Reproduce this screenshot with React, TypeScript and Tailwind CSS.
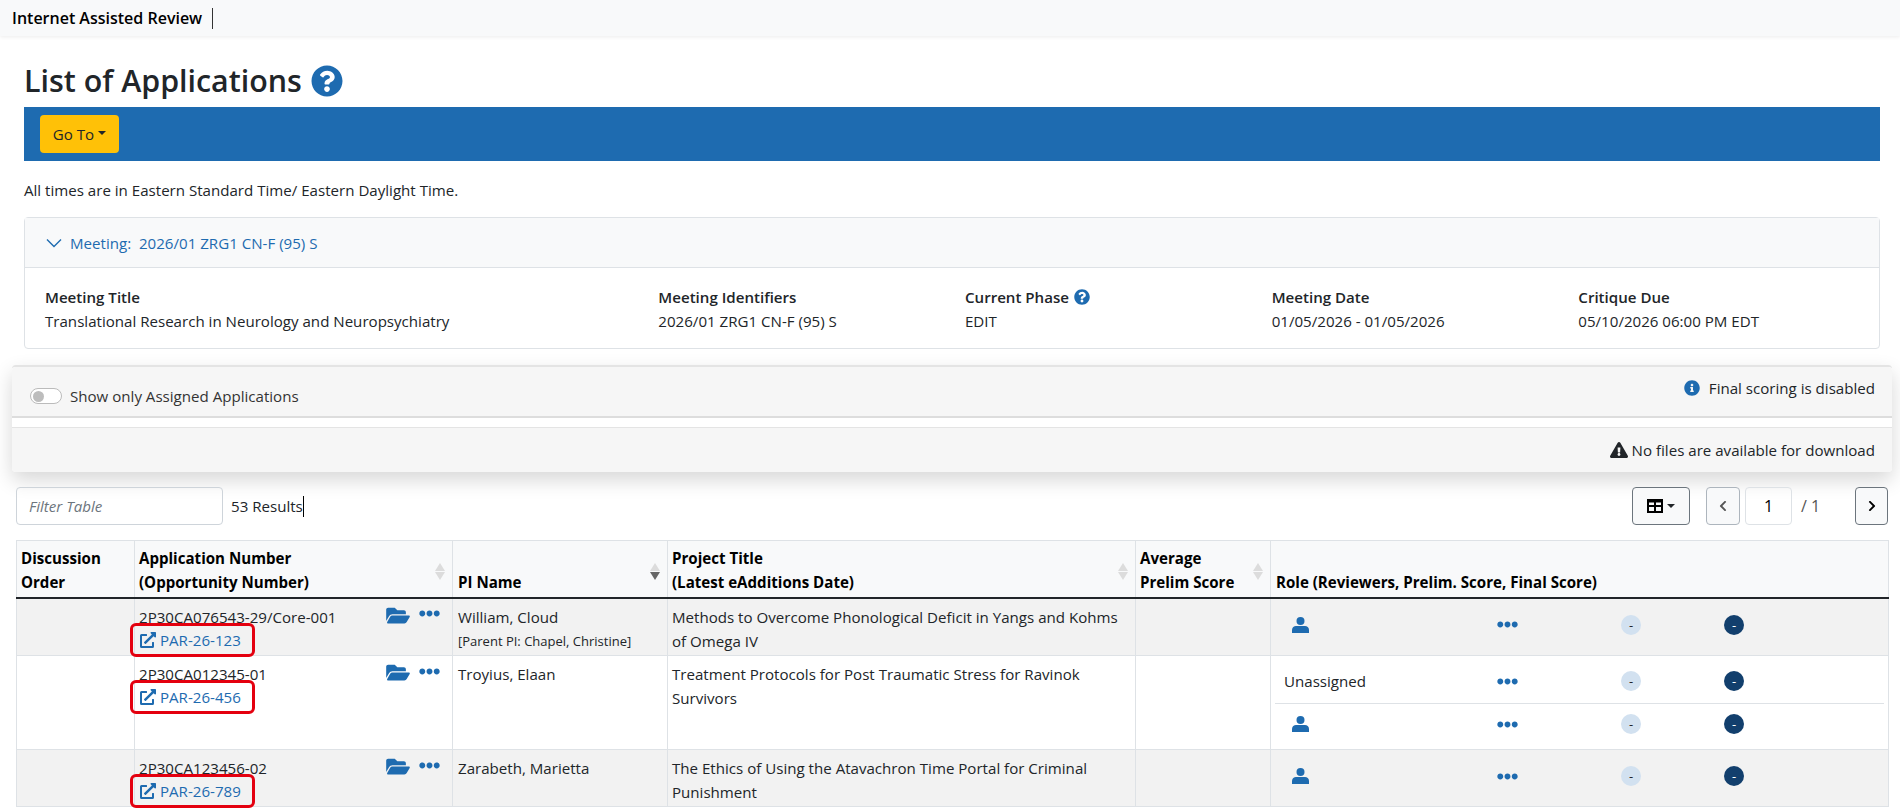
import React from "react";
import {
  FaQuestionCircle,
  FaFolderOpen,
  FaEllipsisH,
  FaExternalLinkAlt,
  FaInfoCircle,
  FaExclamationTriangle,
  FaChevronLeft,
  FaChevronRight,
} from "react-icons/fa";

const SortIcon = ({ active }: { active?: boolean }) => (
  <svg width="10" height="17" viewBox="0 0 10 17" className="absolute right-[7px] top-[22px]">
    <path d="M5 0 L10 8 L0 8 Z" fill="#dcdcdc" />
    <path d="M0 9 L10 9 L5 17 Z" fill={active ? "#666666" : "#dcdcdc"} />
  </svg>
);

const PersonIcon = () => (
  <svg width="17" height="16" viewBox="0 0 17 16" fill="#1e6bb0">
    <circle cx="8.5" cy="4" r="4" />
    <path d="M0 16 V13 C0 10.5 2 9 4 9 H13 C15 9 17 10.5 17 13 V16 Z" />
  </svg>
);

const ScoreDots = ({ children }: { children?: React.ReactNode }) => (
  <div className="flex items-center h-[20px]">
    <div className="w-[205px] shrink-0">{children}</div>
    <FaEllipsisH className="w-[21px] h-[21px] text-[#1e6bb0] shrink-0" />
    <div className="w-[103px] shrink-0" />
    <div className="w-[20px] h-[20px] rounded-full bg-[#d2e1f0] text-[#212529] text-[13px] flex items-center justify-center shrink-0">-</div>
    <div className="w-[83px] shrink-0" />
    <div className="w-[20px] h-[20px] rounded-full bg-[#123f6d] text-white text-[13px] flex items-center justify-center shrink-0">-</div>
  </div>
);

const AppCell = ({ number, par }: { number: string; par: string }) => (
  <td className="relative align-top border-x border-[#dee2e6] pt-[6px] pl-[4px] pr-[12px]">
    <div className="flex items-start justify-between h-[24px]">
      <span>{number}</span>
      <span className="flex items-center gap-[9px] text-[#1e6bb0]">
        <FaFolderOpen className="w-[24px] h-[21px]" />
        <FaEllipsisH className="w-[21px] h-[21px] -mt-[3px]" />
      </span>
    </div>
    <div className="absolute left-[-5px] top-[24px] w-[125px] h-[34px] border-[3px] border-[#e4000f] rounded-[6px] flex items-center pl-[7px] text-[#1e6bb0]">
      <FaExternalLinkAlt className="w-[16px] h-[16px] mr-[4px]" />
      <span>{par}</span>
    </div>
  </td>
);

const columns = [118, 318, 215, 468, 135, 618];

export default function App() {
  return (
    <div className="h-[808px] overflow-hidden bg-white text-[15.1px] leading-[24px] text-[#212529] font-['Open_Sans','Noto_Sans',sans-serif]">
      <header className="h-[36px] bg-[#f8f9fa] shadow-[0_1px_4px_rgba(0,0,0,0.08)] flex items-center pl-[12px]">
        <span className="text-[16px] font-semibold text-[#000] pr-[10px] border-r border-[#333] leading-[21px]">Internet Assisted Review</span>
      </header>

      <main className="pl-[24px] pr-[20px]">
        <div className="flex items-center h-[71px] pt-[18px]">
          <h1 className="text-[30.4px] font-semibold leading-[38px]">List of Applications</h1>
          <FaQuestionCircle className="w-[32px] h-[32px] text-[#1e6bb0] ml-[9px]" />
        </div>

        <div className="h-[54px] bg-[#1e6bb0] flex items-center pl-[16px]">
          <button className="w-[79px] h-[38px] bg-[#ffc107] rounded-[4px] text-[#212529] flex items-center justify-center">
            Go To
            <span className="ml-[4px] mb-[3px] border-x-[4px] border-x-transparent border-t-[4px] border-t-[#212529]" />
          </button>
        </div>

        <p className="mt-[17px] h-[24px]">All times are in Eastern Standard Time/ Eastern Daylight Time.</p>

        <section className="mt-[15px] h-[132px] border border-[#dee2e6] rounded-[4px]">
          <div className="h-[50px] bg-[#f8f9fa] border-b border-[#dee2e6] flex items-center pl-[21px] text-[#1e6bb0]">
            <svg width="16" height="16" viewBox="0 0 16 16" fill="none" stroke="currentColor" strokeWidth="1.4" className="mr-[8px]">
              <path d="M1 4.5 L8 11.5 L15 4.5" />
            </svg>
            <span>Meeting:&nbsp; 2026/01 ZRG1 CN-F (95) S</span>
          </div>
          <div className="grid grid-cols-6 w-[1860px] pl-[20px] pt-[17px]">
            <div className="col-span-2">
              <div className="font-semibold">Meeting Title</div>
              <div>Translational Research in Neurology and Neuropsychiatry</div>
            </div>
            <div>
              <div className="font-semibold">Meeting Identifiers</div>
              <div>2026/01 ZRG1 CN-F (95) S</div>
            </div>
            <div>
              <div className="font-semibold flex items-center">
                Current Phase
                <FaQuestionCircle className="w-[16px] h-[16px] text-[#1e6bb0] ml-[5px]" />
              </div>
              <div>EDIT</div>
            </div>
            <div>
              <div className="font-semibold">Meeting Date</div>
              <div>01/05/2026 - 01/05/2026</div>
            </div>
            <div>
              <div className="font-semibold">Critique Due</div>
              <div>05/10/2026 06:00 PM EDT</div>
            </div>
          </div>
        </section>
      </main>

      <section className="ml-[12px] mr-[8px] mt-[16px] h-[107px] shadow-[0_8px_20px_rgba(0,0,0,0.16)] rounded-[4px] bg-white border-t-2 border-[#e4e4e4]">
        <div className="h-[51px] bg-[#f6f6f6] border-b-2 border-[#dddddd] flex items-start justify-between pr-[17px] rounded-t-[4px]">
          <label className="flex items-center mt-[17px] pl-[18px] text-[#333]">
            <span className="w-[32px] h-[16px] rounded-full border border-[#bbbbbb] bg-white flex items-center pl-[2px] mr-[8px]">
              <span className="w-[11px] h-[11px] rounded-full bg-[#bdbdbd]" />
            </span>
            Show only Assigned Applications
          </label>
          <div className="flex items-center mt-[9px]">
            <FaInfoCircle className="w-[16px] h-[16px] text-[#1e6bb0] mr-[9px]" />
            Final scoring is disabled
          </div>
        </div>
        <div className="mt-[9px] h-[45px] bg-[#f6f6f6] border-t border-[#e4e4e4] flex items-center justify-end pr-[17px] rounded-b-[4px]">
          <FaExclamationTriangle className="w-[18px] h-[16px] text-[#212529] mr-[4px]" />
          No files are available for download
        </div>
      </section>

      <div className="relative z-10 flex items-center h-[38px] mt-[15px] pl-[16px] pr-[12px]">
        <input
          placeholder="Filter Table"
          className="w-[207px] h-[38px] border border-[#ced4da] rounded-[4px] pl-[12px] italic outline-none placeholder:text-[#6c757d]"
        />
        <span className="ml-[8px]">53 Results</span>
        <span className="w-px h-[21px] bg-black" />
        <div className="ml-auto flex items-center">
          <button className="w-[58px] h-[38px] border border-[#6c757d] rounded-[4px] bg-[#f8f9fa] flex items-center justify-center">
            <svg width="16" height="14" viewBox="0 0 16 14" className="mr-[4px]">
              <path d="M1 1 H15 V13 H1 Z M1 7 H15 M8 1 V13" fill="none" stroke="#000" strokeWidth="2" />
              <rect x="1" y="1" width="14" height="2.5" fill="#000" />
            </svg>
            <span className="border-x-[4px] border-x-transparent border-t-[4px] border-t-[#212529]" />
          </button>
          <button className="ml-[16px] w-[34px] h-[38px] border border-[#adb5bd] rounded-[4px] bg-[#f8f9fa] flex items-center justify-center text-[#555]">
            <FaChevronLeft className="w-[12px] h-[12px]" />
          </button>
          <div className="ml-[5px] w-[47px] h-[38px] border border-[#dee2e6] rounded-[4px] flex items-center justify-center text-[16px] text-[#000]">1</div>
          <span className="ml-[9px] w-[54px] text-[16px] text-[#555]">/ 1</span>
          <button className="w-[33px] h-[38px] border border-[#6c757d] rounded-[4px] bg-[#f8f9fa] flex items-center justify-center text-black">
            <FaChevronRight className="w-[12px] h-[12px]" />
          </button>
        </div>
      </div>

      <div className="relative z-10 ml-[16px] mt-[15px] w-[1872px]">
        <table className="table-fixed border-collapse w-full">
          <colgroup>
            {columns.map((w, i) => (
              <col key={i} style={{ width: w }} />
            ))}
          </colgroup>
          <thead>
            <tr className="h-[57px] bg-[#f8f9fa] border-t border-[#dee2e6] border-b-[2px] border-b-[#212529] text-black font-bold text-left align-bottom">
              <th className="relative border-x border-[#dee2e6] pl-[4px] pb-[3px] font-bold">Discussion<br />Order</th>
              <th className="relative border-x border-[#dee2e6] pl-[4px] pb-[3px] font-bold">Application Number<br />(Opportunity Number)<SortIcon /></th>
              <th className="relative border-x border-[#dee2e6] pl-[5px] pb-[3px] font-bold">PI Name<SortIcon active /></th>
              <th className="relative border-x border-[#dee2e6] pl-[4px] pb-[3px] font-bold">Project Title<br />(Latest eAdditions Date)<SortIcon /></th>
              <th className="relative border-x border-[#dee2e6] pl-[4px] pb-[3px] font-bold">Average<br />Prelim Score<SortIcon /></th>
              <th className="relative border-x border-[#dee2e6] pl-[5px] pb-[3px] font-bold">Role (Reviewers, Prelim. Score, Final Score)</th>
            </tr>
          </thead>
          <tbody>
            <tr className="h-[58px] bg-[#f2f2f2] border-b border-[#dee2e6]">
              <td className="border-x border-[#dee2e6]" />
              <AppCell number="2P30CA076543-29/Core-001" par="PAR-26-123" />
              <td className="align-top border-x border-[#dee2e6] pt-[6px] pl-[5px]">
                William, Cloud
                <div className="text-[13px]">[Parent PI: Chapel, Christine]</div>
              </td>
              <td className="align-top border-x border-[#dee2e6] pt-[6px] pl-[4px] pr-[14px]">Methods to Overcome Phonological Deficit in Yangs and Kohms of Omega IV</td>
              <td className="border-x border-[#dee2e6]" />
              <td className="align-top border-x border-[#dee2e6] pt-[16px] pl-[21px]">
                <ScoreDots><PersonIcon /></ScoreDots>
              </td>
            </tr>
            <tr className="h-[94px] border-b border-[#dee2e6]">
              <td className="border-x border-[#dee2e6]" />
              <AppCell number="2P30CA012345-01" par="PAR-26-456" />
              <td className="align-top border-x border-[#dee2e6] pt-[6px] pl-[5px]">Troyius, Elaan</td>
              <td className="align-top border-x border-[#dee2e6] pt-[6px] pl-[4px] pr-[14px]">Treatment Protocols for Post Traumatic Stress for Ravinok Survivors</td>
              <td className="border-x border-[#dee2e6]" />
              <td className="align-top border-x border-[#dee2e6] px-[4px] pt-[15px]">
                <div className="pl-[17px] pb-[12px] border-b border-[#dee2e6]">
                  <ScoreDots><span className="-ml-[8px]">Unassigned</span></ScoreDots>
                </div>
                <div className="pl-[17px] pt-[10px]">
                  <ScoreDots><PersonIcon /></ScoreDots>
                </div>
              </td>
            </tr>
            <tr className="h-[57px] bg-[#f2f2f2] border-b border-[#dee2e6]">
              <td className="border-x border-[#dee2e6]" />
              <AppCell number="2P30CA123456-02" par="PAR-26-789" />
              <td className="align-top border-x border-[#dee2e6] pt-[6px] pl-[5px]">Zarabeth, Marietta</td>
              <td className="align-top border-x border-[#dee2e6] pt-[6px] pl-[4px] pr-[14px]">The Ethics of Using the Atavachron Time Portal for Criminal Punishment</td>
              <td className="border-x border-[#dee2e6]" />
              <td className="align-top border-x border-[#dee2e6] pt-[16px] pl-[21px]">
                <ScoreDots><PersonIcon /></ScoreDots>
              </td>
            </tr>
          </tbody>
        </table>
      </div>
    </div>
  );
}
